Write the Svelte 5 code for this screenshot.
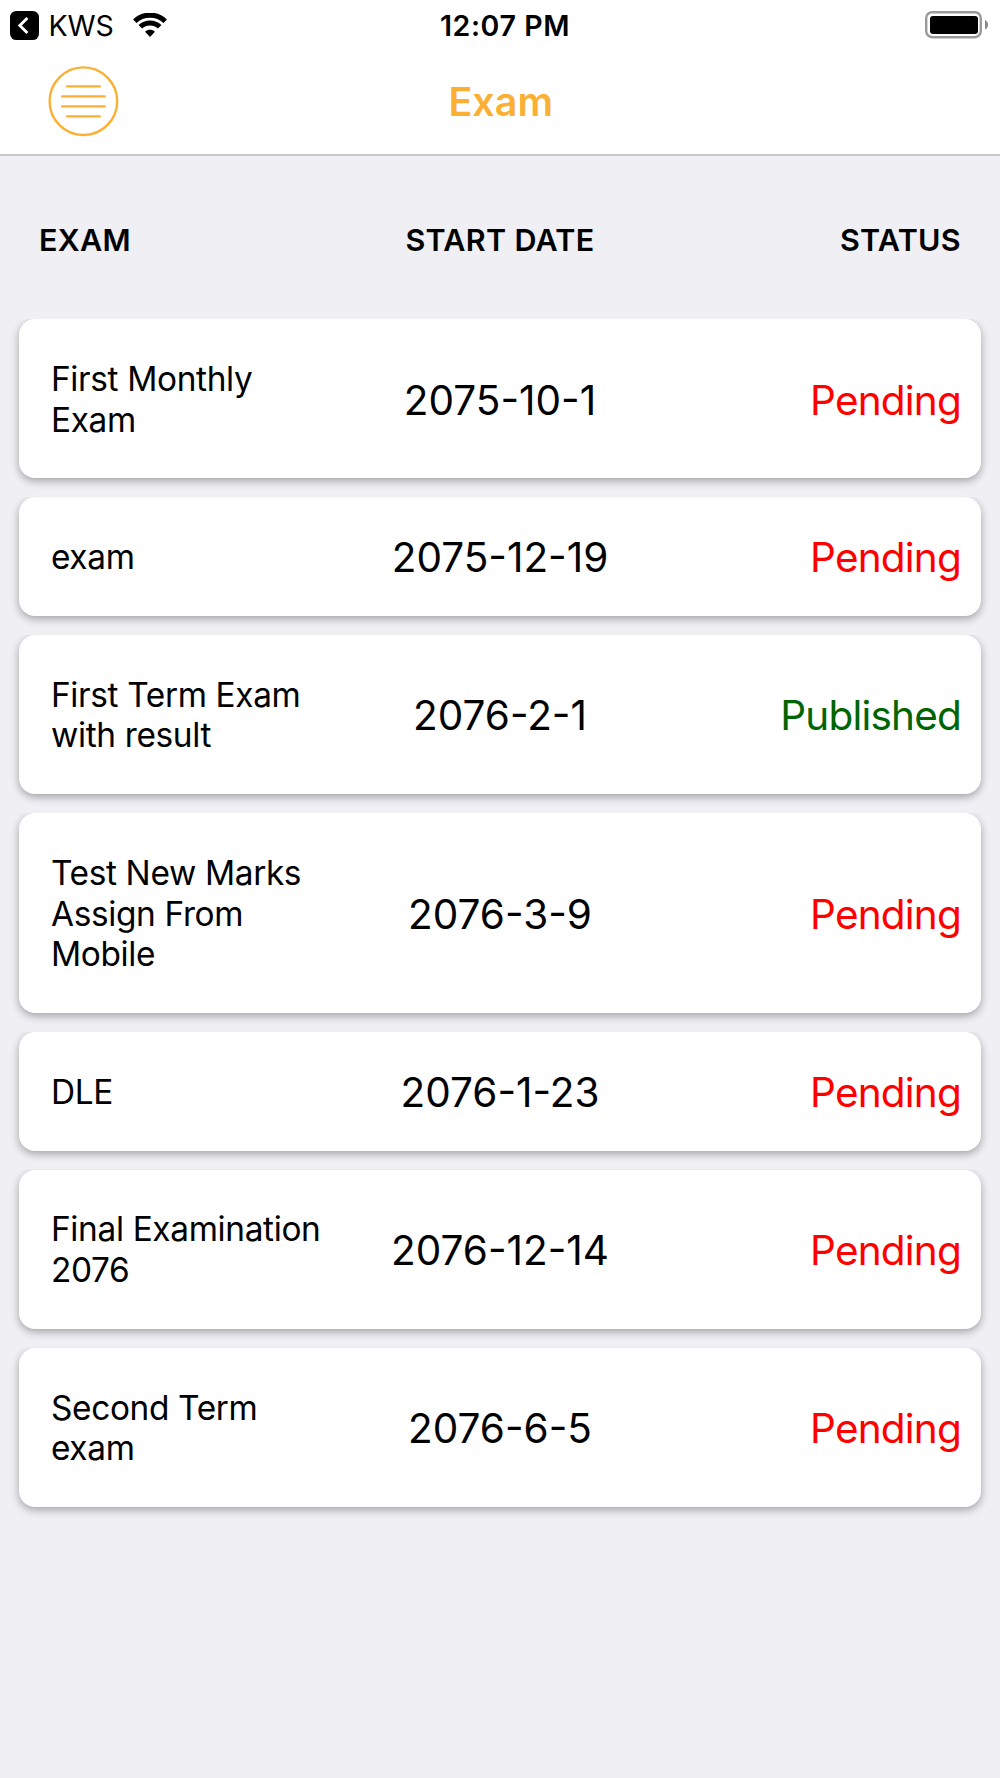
<script lang="ts">
	interface Exam {
		name: string;
		startDate: string;
		status: 'Pending' | 'Published';
	}

	const exams: Exam[] = [
		{ name: 'First Monthly Exam', startDate: '2075-10-1', status: 'Pending' },
		{ name: 'exam', startDate: '2075-12-19', status: 'Pending' },
		{ name: 'First Term Exam with result', startDate: '2076-2-1', status: 'Published' },
		{ name: 'Test New Marks Assign From Mobile', startDate: '2076-3-9', status: 'Pending' },
		{ name: 'DLE', startDate: '2076-1-23', status: 'Pending' },
		{ name: 'Final Examination 2076', startDate: '2076-12-14', status: 'Pending' },
		{ name: 'Second Term exam', startDate: '2076-6-5', status: 'Pending' }
	];
</script>

<div class="screen">
	<header class="top">
		<div class="status-bar">
			<div class="carrier">
				<svg class="back" viewBox="0 0 30 30" aria-hidden="true">
					<rect width="30" height="30" rx="6.5" />
					<path d="M18 7.3 L10.2 15 L18 22.7" />
				</svg>
				<span class="app-name">KWS</span>
				<svg class="wifi" viewBox="0 0 34 25" aria-hidden="true">
					<path d="M1.8 8.2 C10.2 0.1 23.8 0.1 32.2 8.2" />
					<path d="M7.3 13.8 C12.7 8.7 21.3 8.7 26.7 13.8" />
					<path class="dot" d="M12.1 18.7 C14.9 16.2 19.1 16.2 21.9 18.7 L17 24 Z" />
				</svg>
			</div>
			<span class="clock">12:07 PM</span>
			<svg class="battery" viewBox="0 0 64 28" aria-hidden="true">
				<rect class="shell" x="1.2" y="1.2" width="54.6" height="25" rx="6" />
				<rect x="5" y="5" width="48" height="18" rx="3" />
				<path class="tip" d="M60 9 C64 10.5 64 17 60 18.5 Z" />
			</svg>
		</div>
		<nav class="nav-bar">
			<button class="menu" aria-label="Menu">
				<svg viewBox="0 0 70 70" aria-hidden="true">
					<circle cx="35.4" cy="35.2" r="33.8" />
					<path d="M19.1 20.4H51.7M14.1 30.4H56.7M14.1 40.4H56.7M19.1 50.4H51.7" />
				</svg>
			</button>
			<h1>Exam</h1>
		</nav>
	</header>

	<div class="columns">
		<span>EXAM</span>
		<span class="center">START DATE</span>
		<span class="end">STATUS</span>
	</div>

	<ul class="exams">
		{#each exams as exam}
			<li class="card">
				<span class="name">{exam.name}</span>
				<span class="date">{exam.startDate}</span>
				<span class="status" class:published={exam.status === 'Published'}>{exam.status}</span>
			</li>
		{/each}
	</ul>
</div>

<style>
	:global(body) {
		margin: 0;
		background: #efeff4;
	}

	.screen {
		box-sizing: border-box;
		width: 1000px;
		min-height: 1778px;
		background: #efeff4;
		color: #000;
		font-family: Inter, 'Liberation Sans', sans-serif;
	}

	.top {
		box-sizing: border-box;
		height: 156px;
		background: #fff;
		border-bottom: 2px solid #c8c8cc;
	}

	.status-bar {
		display: grid;
		grid-template-columns: 1fr auto 1fr;
		align-items: center;
		height: 51px;
		padding: 0 12px 0 10px;
	}

	.carrier {
		display: flex;
		align-items: center;
	}

	.back {
		width: 29px;
		height: 29px;
	}

	.back path {
		fill: none;
		stroke: #fff;
		stroke-width: 3;
	}

	.app-name {
		margin-left: 9.5px;
		font-size: 28.5px;
		letter-spacing: -0.1px;
	}

	.wifi {
		width: 34px;
		height: 25px;
		margin: -1px 0 0 19px;
	}

	.wifi path {
		fill: none;
		stroke: #000;
		stroke-width: 5;
	}

	.wifi .dot {
		fill: #000;
		stroke: none;
	}

	.clock {
		margin-left: 12px;
		font-size: 28.5px;
		font-weight: 600;
		letter-spacing: 0.6px;
	}

	.battery {
		justify-self: end;
		width: 64px;
		height: 28px;
		margin: -2px -1px 0 0;
	}

	.battery .shell {
		fill: none;
		stroke: #999;
		stroke-width: 2.4;
	}

	.battery .tip {
		fill: #888;
	}

	.nav-bar {
		display: grid;
		grid-template-columns: 1fr auto 1fr;
		align-items: center;
		height: 100px;
		padding: 0 46.5px 0 48px;
	}

	.menu {
		width: 70px;
		height: 70px;
		padding: 0;
		border: 0;
		background: none;
	}

	.menu svg {
		display: block;
		width: 70px;
		height: 70px;
		overflow: visible;
		fill: none;
		stroke: #fbb034;
		stroke-width: 2.4;
		stroke-linecap: round;
	}

	h1 {
		margin: 0;
		padding-top: 2px;
		color: #fbb034;
		font-size: 39.5px;
		font-weight: 600;
	}

	.columns {
		display: grid;
		grid-template-columns: 1fr 1fr 1fr;
		align-items: center;
		height: 163px;
		padding: 3px 39px 0;
		box-sizing: border-box;
		font-size: 30.5px;
		font-weight: 600;
		letter-spacing: 0.3px;
	}

	.center {
		text-align: center;
	}

	.end {
		text-align: right;
	}

	.exams {
		display: flex;
		flex-direction: column;
		gap: 19px;
		margin: 0;
		padding: 0 19px;
		list-style: none;
	}

	.card {
		display: grid;
		grid-template-columns: 289px 1fr 301px;
		align-items: center;
		box-sizing: border-box;
		padding: 39.9px 20px 38px 32px;
		border-radius: 16px;
		background: #fff;
		box-shadow: 0 3px 8px rgba(0, 0, 0, 0.32);
		/* the row clips the shadow along its top edge */
		clip-path: inset(0 -19px -19px -19px);
	}

	.name {
		font-size: 33.4px;
		line-height: 40.67px;
		letter-spacing: -0.35px;
	}

	.date,
	.status {
		padding-top: 1px;
		font-size: 40.5px;
		line-height: 39px;
	}

	.date {
		text-align: center;
	}

	.status {
		color: #f00;
		letter-spacing: -0.8px;
		text-align: right;
	}

	.published {
		color: #006400;
	}
</style>
